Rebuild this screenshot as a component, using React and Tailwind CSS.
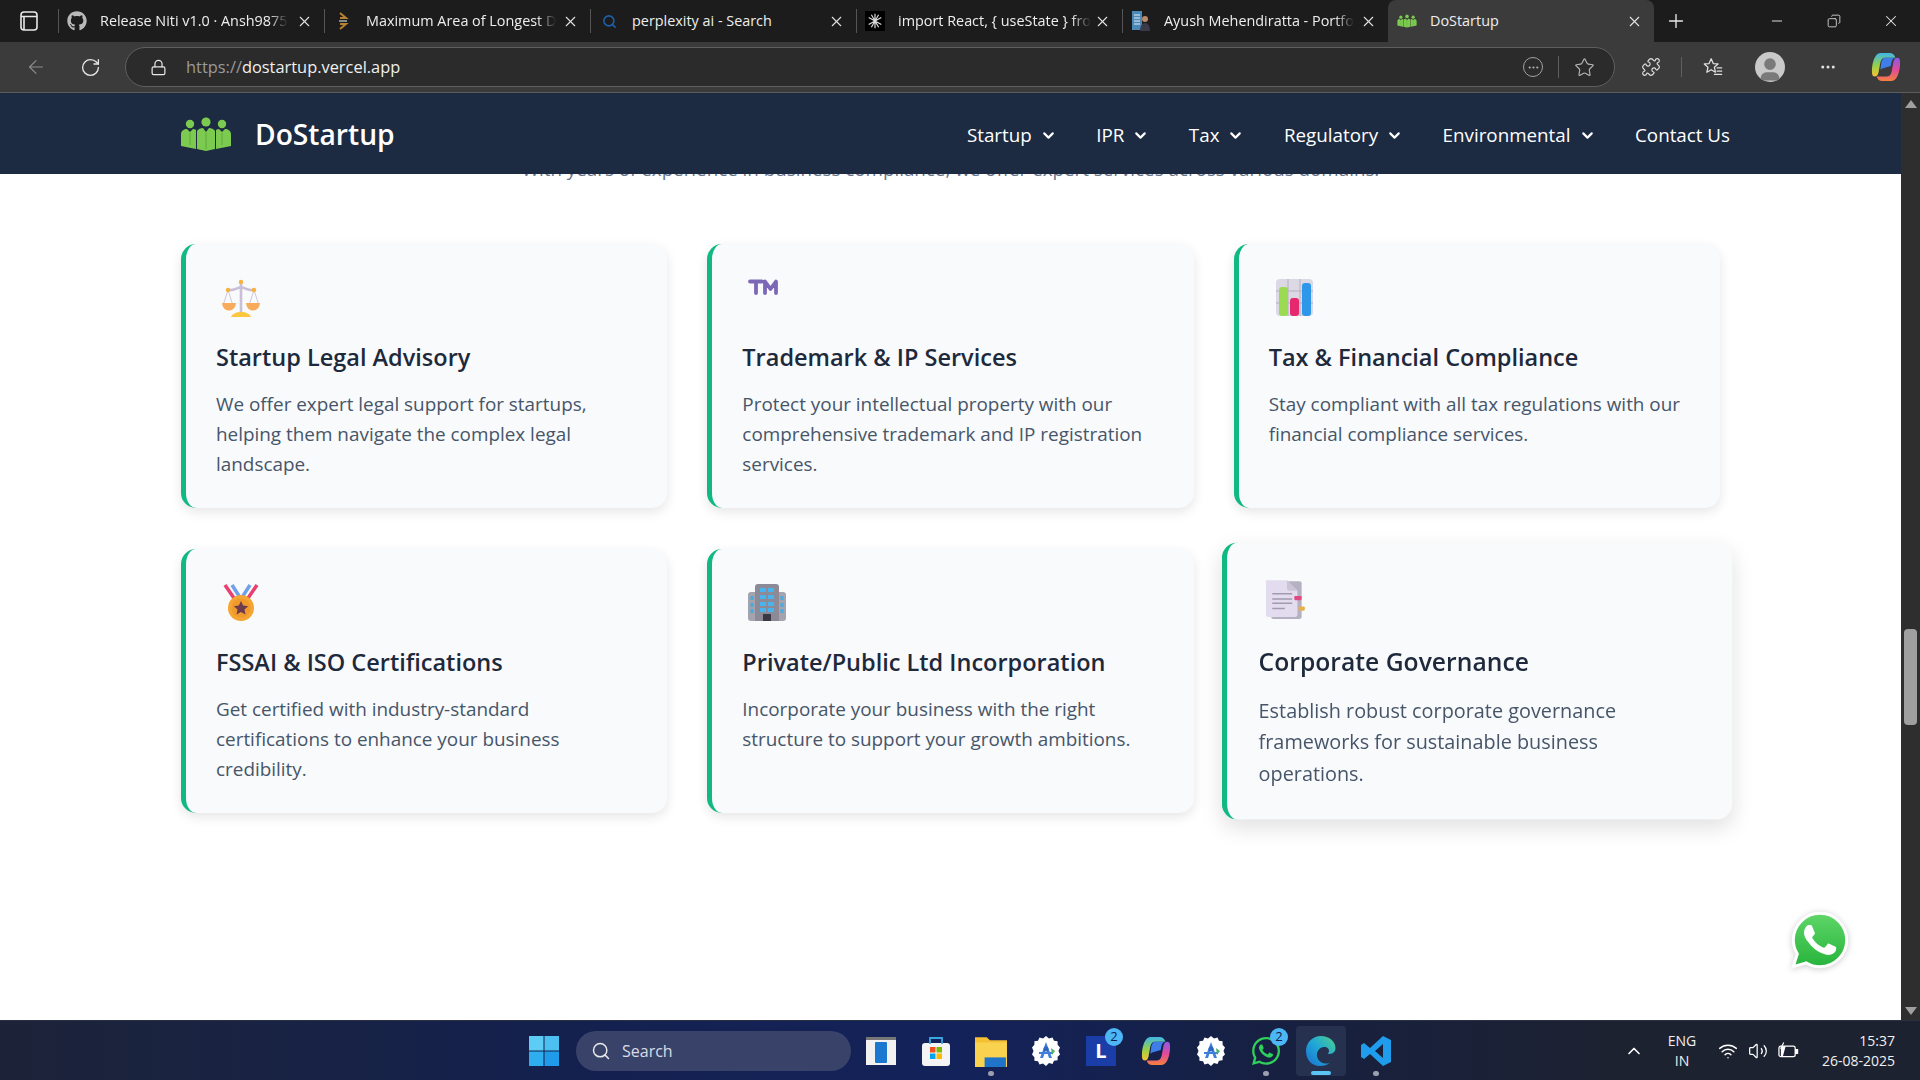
import React from "react";
import { FaGithub, FaWhatsapp } from "react-icons/fa";
import { ArrowLeft, RotateCw, Lock, Star, Puzzle, MoreHorizontal, X, Plus, Minus, Copy, ChevronDown, ChevronUp, Search, Wifi, Volume2, User } from "lucide-react";

const Logo = ({ className }) => (
  <svg viewBox="0 0 52 34" className={className}>
    <g fill="#7ccb50">
      <circle cx="10" cy="7" r="4.2" /><circle cx="26" cy="5" r="4.6" /><circle cx="42" cy="7" r="4.2" />
      <path d="M1 17c0-3 3-5 6-5l3 3 3-3c1 0 2 .3 3 1v19l-15-3z" />
      <path d="M51 17c0-3-3-5-6-5l-3 3-3-3c-1 0-2 .3-3 1v19l15-3z" />
      <path d="M17 14c1-2 4-3 6-3l3 4 3-4c2 0 5 1 6 3v18l-9 2-9-2z" />
    </g>
    <path d="M26 16v16M10 16v12M42 16v12" stroke="#5aa838" strokeWidth="1" />
  </svg>
);

const Scales = () => (
  <svg viewBox="0 0 40 40" className="w-10 h-10">
    <path d="M20 3v32M7 12c5 1 9-2 13-3 4 1 8 4 13 3" stroke="#c9bfd6" strokeWidth="2.600" fill="none" />
    <path d="M7 12 2.500 26M7 12l4.500 14M33 12l-4.500 14M33 12l4.500 14" stroke="#cfc6da" strokeWidth="1" fill="none" />
    <circle cx="20" cy="4" r="2.200" fill="#f7b13c" /><circle cx="7" cy="12" r="2.200" fill="#f7b13c" /><circle cx="33" cy="12" r="2.200" fill="#f7b13c" />
    <path d="M1 25h14c-.5 5-3.500 7.500-7 7.500S1.500 30 1 25zM25 25h14c-.5 5-3.500 7.500-7 7.500S25.500 30 25 25z" fill="#f9ab5c" />
    <path d="M10 39c1-3 5-5 10-5s9 2 10 5z" fill="#fcc83f" />
  </svg>
);
const TM = () => (
  <svg viewBox="0 0 40 40" className="w-10 h-10">
    <path d="M3 3.500h12M9 3.500V15M18 15V3.500l5.500 7.500 5.500-7.500V15" stroke="#7d68b8" strokeWidth="3.800" fill="none" strokeLinecap="round" strokeLinejoin="round" />
  </svg>
);
const Chart = () => (
  <svg viewBox="0 0 40 40" className="w-10 h-10">
    <rect x="2" y="1" width="37" height="37" rx="4" fill="#dcd8e4" />
    <path d="M14 1v37M26 1v37M2 13h37M2 25h37" stroke="#b5b0bf" strokeWidth="1" />
    <rect x="5" y="9" width="9" height="29" rx="3" fill="#9adb52" />
    <rect x="16" y="20" width="9" height="18" rx="3" fill="#e6286e" />
    <rect x="28" y="5" width="9" height="33" rx="3" fill="#2e97ea" />
  </svg>
);
const Medal = () => (
  <svg viewBox="0 0 40 40" className="w-10 h-10">
    <path d="M4 2l11 16M36 2 25 18" stroke="#e8416f" strokeWidth="3.500" />
    <path d="M11 2l9 14M29 2l-9 14" stroke="#6fa0ea" strokeWidth="3.500" />
    <circle cx="20" cy="25" r="13" fill="#f5a532" />
    <circle cx="20" cy="25" r="9.500" fill="#ee9a2c" />
    <path d="m20 18 2.200 4.600 5 .6-3.700 3.400 1 5-4.500-2.500-4.500 2.500 1-5-3.700-3.400 5-.6z" fill="#6d3a4e" />
  </svg>
);
const Building = () => (
  <svg viewBox="0 0 40 40" className="w-10 h-10">
    <rect x="1" y="9" width="38" height="29" rx="3" fill="#a5a3ad" />
    <path d="M8 4a3 3 0 0 1 3-3h18a3 3 0 0 1 3 3v34H8z" fill="#8d8a97" />
    {[5, 12, 19, 25].map((y) => (
      <g key={y} fill="#49b3ee"><rect x="13" y={y} width="6" height="4" /><rect x="21" y={y} width="6" height="4" /></g>
    ))}
    {[13, 20, 26].map((y) => (
      <g key={y} fill="#4aa9dd"><rect x="3.500" y={y} width="3" height="4" /><rect x="33.500" y={y} width="3" height="4" /></g>
    ))}
    <rect x="16" y="31" width="8" height="7" fill="#3a3644" />
  </svg>
);
const Doc = () => (
  <svg viewBox="0 0 40 40" className="w-10 h-10">
    <rect x="7" y="3" width="29" height="36" rx="2" fill="#b6b1c2" />
    <path d="M2 2h20l10 10v23a2 2 0 0 1-2 2H4a2 2 0 0 1-2-2z" fill="#e3dcef" />
    <path d="M22 2l10 10h-8a2 2 0 0 1-2-2z" fill="#cbc4d8" />
    <path d="M8 15h19M8 20h19M8 24h19M8 29h12" stroke="#a29bb0" strokeWidth="1.400" />
    <rect x="29" y="17" width="7" height="4" rx="1" fill="#e14a80" />
    <rect x="33" y="27" width="6" height="4" rx="1" fill="#e8b04a" />
  </svg>
);

const Tab = ({ icon, title, active, fade }) => (
  <div className={`relative w-[266px] h-full flex items-center shrink-0 ${active ? "bg-[#3b3b3b] rounded-t-lg" : ""}`}>
    {!active && <span className="absolute left-0 top-[9px] h-[24px] w-px bg-[#555555]" />}
    <span className="w-[20px] h-[20px] ml-[9px] mr-[13px] flex items-center justify-center shrink-0">{icon}</span>
    <span className={`whitespace-nowrap text-[14.4px] text-[#eeeeee] ${fade ? "[mask-image:linear-gradient(to_right,black_90%,transparent)]" : ""}`}>{title}</span>
    <X size={17} className="ml-auto mr-[11px] text-[#e4e4e4]" strokeWidth={1.500} />
  </div>
);

const NavItem = ({ label, arrow = true }) => (
  <div className="flex items-center gap-[8px] text-[18.8px] text-white pt-[3px]">
    <span>{label}</span>
    {arrow && <ChevronDown size={17} strokeWidth={3} />}
  </div>
);

const Card = ({ icon, title, text, hover }) => (
  <div className={`h-[264px] bg-[#f8fafc] border-l-[5px] border-[#10b981] rounded-[15px] pt-[30px] pl-[30px] pr-[30px] ${hover ? "scale-105 shadow-[0_8px_20px_rgba(0,0,0,0.12)]" : "shadow-[0_4px_12px_rgba(0,0,0,0.1)]"}`}>
    <div className="h-[63px] pl-[5px] pt-[4px]">{icon}</div>
    <h3 className="text-[23.5px] leading-[40px] font-semibold text-[#1e293b] mb-[12px] whitespace-nowrap">{title}</h3>
    <p className="text-[18.9px] leading-[30px] text-[#475569]">{text}</p>
  </div>
);

const Pin = ({ children, n, dot, active }) => (
  <div className={`relative w-[50px] h-[50px] flex items-center justify-center rounded ${active ? "bg-[#26304f]" : ""}`}>
    {children}
    {n && <span className="absolute right-[3px] top-[2px] w-[18px] h-[18px] rounded-full bg-[#4db6f5] text-[#10204a] text-[13px] flex items-center justify-center">{n}</span>}
    {dot && <span className="absolute bottom-[0px] w-[6px] h-[5px] rounded-sm bg-[#9aa0ad]" />}
    {active && <span className="absolute bottom-[1px] w-[20px] h-[4px] rounded-sm bg-[#5cc4f5]" />}
  </div>
);

const AStudio = () => (
  <svg viewBox="0 0 32 32" className="w-[32px] h-[32px]">
    <path d="M16 1l3 2.500 3.500-1 1.500 3.300 3.600.5v3.500L30 12.500 28.500 16l1.500 3.500-2.400 2.200v3.500l-3.600.5-1.500 3.300-3.500-1L16 31l-3-2.500-3.500 1L8 26.200l-3.600-.5v-3.500L2 19.500 3.500 16 2 12.500l2.400-2.700V6.300L8 5.800l1.500-3.300 3.500 1z" fill="#fff" />
    <path d="M16 7l-6 16h3l3-9 3 9h3z" fill="#3f7fd9" /><circle cx="16" cy="14" r="2.500" fill="#2c66c0" /><path d="M9 18h14" stroke="#3f7fd9" strokeWidth="2" />
    <path d="M21 13l4 3-3 4z" fill="#4caf6a" />
  </svg>
);

const Copilot = ({ size, id }) => (
  <svg viewBox="0 0 32 32" style={{ width: size, height: size }}>
    <defs>
      <linearGradient id={`${id}a`} x1="0" y1="0" x2="0" y2="1"><stop offset="0" stopColor="#3fb6e8" /><stop offset=".5" stopColor="#8fd14f" /><stop offset="1" stopColor="#f7c430" /></linearGradient>
      <linearGradient id={`${id}b`} x1="0" y1="0" x2="0" y2="1"><stop offset="0" stopColor="#8a5be8" /><stop offset=".5" stopColor="#e0499c" /><stop offset="1" stopColor="#f5803e" /></linearGradient>
    </defs>
    <path d="M10 1h10c3 0 5 2 6 5H15c-3 0-4 2-5 5L8 22c-1 3-2 4-4 4-3 0-3-3-3-6C1 12 4 1 10 1z" fill={`url(#${id}a)`} />
    <path d="M22 31H12c-3 0-5-2-6-5h11c3 0 4-2 5-5l2-11c1-3 2-4 4-4 3 0 3 3 3 6 0 8-3 19-9 19z" fill={`url(#${id}b)`} />
    <path d="M15 6h11c-1.500 0-3 1-4 4l-1 5-7 2c-2 .5-3 1-4 2l1-8c1-3 2-5 4-5z" fill="#3f7de8" />
  </svg>
);

const rows = [
  { icon: <Scales />, title: "Startup Legal Advisory", text: "We offer expert legal support for startups, helping them navigate the complex legal landscape." },
  { icon: <TM />, title: "Trademark & IP Services", text: "Protect your intellectual property with our comprehensive trademark and IP registration services." },
  { icon: <Chart />, title: "Tax & Financial Compliance", text: "Stay compliant with all tax regulations with our financial compliance services." },
  { icon: <Medal />, title: "FSSAI & ISO Certifications", text: "Get certified with industry-standard certifications to enhance your business credibility." },
  { icon: <Building />, title: "Private/Public Ltd Incorporation", text: "Incorporate your business with the right structure to support your growth ambitions." },
  { icon: <Doc />, title: "Corporate Governance", text: "Establish robust corporate governance frameworks for sustainable business operations.", hover: true },
];

export default function App() {
  return (
    <div className="w-[1920px] h-[1080px] flex flex-col overflow-hidden bg-white font-['Open_Sans',sans-serif]">
      {/* tab strip */}
      <div className="h-[42px] bg-[#1c1c1c] flex items-end shrink-0">
        <div className="w-[58px] h-full flex items-center justify-center pr-[1px]">
          <svg viewBox="0 0 18 20" className="w-[18px] h-[20px]" fill="none" stroke="#e8e8e8" strokeWidth="1.600"><rect x="1" y="1" width="16" height="18" rx="3" /><path d="M1 5.500h16M4 5.500V19" /></svg>
        </div>
        <Tab fade icon={<FaGithub size={20} color="#b9b9b9" />} title="Release Niti v1.0 · Ansh9875" />
        <Tab fade icon={<svg viewBox="0 0 12 20" className="w-[12px] h-[20px]"><path d="M3 2l6 5H3M3 18l6-5H3" stroke="#b78231" strokeWidth="2" fill="none" /><path d="M2 10h8" stroke="#888" strokeWidth="2" /></svg>} title="Maximum Area of Longest D" />
        <Tab icon={<Search size={15} color="#1d5fa8" strokeWidth={2.500} />} title="perplexity ai - Search" />
        <Tab fade icon={<span className="w-[20px] h-[20px] bg-black flex items-center justify-center"><svg viewBox="0 0 20 20" className="w-[18px] h-[18px]" stroke="#ddd" strokeWidth="1.300" fill="none"><path d="M10 2v16M3 6l14 8M17 6 3 14M6 3l8 14M14 3 6 17" /></svg></span>} title="import React, { useState } fro" />
        <Tab fade icon={<svg viewBox="0 0 20 22" className="w-[20px] h-[22px]"><rect x="1" y="1" width="10" height="19" fill="#4a88b8" /><path d="M3 5h6M3 8h6M3 11h6M3 14h6" stroke="#e8eef4" /><circle cx="14" cy="9" r="3" fill="#b98a6c" /><path d="M9 21c0-5 2-8 5-8s5 3 5 8z" fill="#3a3a4a" /></svg>} title="Ayush Mehendiratta - Portfo" />
        <Tab active icon={<Logo className="w-[20px] h-[20px]" />} title="DoStartup" />
        <div className="w-[44px] h-full flex items-center justify-center"><Plus size={22} color="#e8e8e8" strokeWidth={1.500} /></div>
        <div className="ml-auto flex h-full items-center text-[#e8e8e8]">
          <div className="w-[57px] flex justify-center"><Minus size={16} strokeWidth={1.400} /></div>
          <div className="w-[57px] flex justify-center"><Copy size={14} strokeWidth={1.400} className="-scale-x-100" /></div>
          <div className="w-[58px] flex justify-center"><X size={18} strokeWidth={1.400} /></div>
        </div>
      </div>
      {/* toolbar */}
      <div className="h-[51px] bg-[#3b3b3b] border-b border-[#5c5c5c] flex items-center shrink-0">
        <div className="w-[70px] flex justify-center pl-[1px]"><ArrowLeft size={22} color="#8c8c8c" strokeWidth={1.300} /></div>
        <div className="w-[40px] flex justify-center"><RotateCw size={21} color="#e8e8e8" strokeWidth={1.500} /></div>
        <div className="ml-[15px] w-[1490px] h-[40px] rounded-full bg-[#2b2b2b] border-[1.5px] border-[#5f5f5f] flex items-center">
          <Lock size={17} color="#e8e8e8" strokeWidth={1.700} className="ml-[24px]" />
          <div className="ml-[19px] text-[16.4px] text-[#9a9a9a] pt-[1px]">https://<span className="text-[#f0f0f0]">dostartup.vercel.app</span></div>
          <div className="ml-auto mr-[19px] flex items-center text-[#b5b5b5]">
            <span className="w-[20px] h-[20px] rounded-full border border-[#a0a0a0] flex items-center justify-center"><MoreHorizontal size={13} /></span>
            <span className="mx-[15px] w-px h-[22px] bg-[#5f5f5f]" />
            <Star size={21} strokeWidth={1.300} />
          </div>
        </div>
        <div className="w-[72px] flex justify-center"><Puzzle size={20} color="#e0e0e0" strokeWidth={1.400} /></div>
        <span className="w-px h-[20px] bg-[#5f5f5f] -ml-[6px]" />
        <div className="w-[62px] flex justify-center">
          <svg viewBox="0 0 24 24" className="w-[22px] h-[22px]" fill="none" stroke="#e0e0e0" strokeWidth="1.400" strokeLinejoin="round"><path d="M10 3l2.300 5.200 5.200.5-4 3.600 1.200 5.400L10 15l-4.700 2.700 1.200-5.400-4-3.600 5.200-.5z" /><path d="M16 13h6M16 16.500h6M13 20h9" /></svg>
        </div>
        <div className="w-[30px] h-[30px] rounded-full bg-[#c9c9c9] flex items-center justify-center overflow-hidden ml-[11px]"><User size={28} color="#7a7a7a" fill="#7a7a7a" className="mt-[6px]" /></div>
        <div className="w-[86px] flex justify-center"><MoreHorizontal size={18} color="#e0e0e0" /></div>
        <div className="ml-[0px]"><Copilot size={30} id="cpa" /></div>
      </div>
      {/* viewport */}
      <div className="flex-1 min-h-0 flex">
        <div className="relative w-[1901px] overflow-hidden">
          <nav className="relative z-10 h-[81px] bg-[#1c2a42] flex items-center pl-[180px] pr-[171px]">
            <Logo className="w-[52px] h-[34px]" />
            <span className="ml-[23px] text-[28.2px] font-semibold text-white pt-[2px]">DoStartup</span>
            <div className="ml-auto flex items-center gap-[39.5px]">
              <NavItem label="Startup" /><NavItem label="IPR" /><NavItem label="Tax" /><NavItem label="Regulatory" /><NavItem label="Environmental" /><NavItem label="Contact Us" arrow={false} />
            </div>
          </nav>
          <p className="-mt-[20px] h-[30px] leading-[30px] text-[18.8px] text-[#64748b] text-center">With years of experience in business compliance, we offer expert services across various domains.</p>
          <div className="mt-[60px] ml-[181px] w-[1539px] grid grid-cols-3 gap-x-[40px] gap-y-[41px]">
            {rows.map((r) => <Card key={r.title} {...r} />)}
          </div>
          <svg viewBox="0 0 24 24" className="absolute right-[49px] bottom-[48px] w-[64px] h-[64px] drop-shadow-[0_1px_3px_rgba(0,0,0,0.2)]">
            <defs><linearGradient id="wa" x1="0" y1="0" x2="0" y2="1"><stop offset="0" stopColor="#5fd668" /><stop offset="1" stopColor="#27b43c" /></linearGradient></defs>
            <path d="M12 2C6.500 2 2 6.500 2 12c0 1.900.5 3.600 1.500 5.200L2 22l4.900-1.400c1.500.9 3.200 1.400 5.100 1.400 5.500 0 10-4.500 10-10S17.500 2 12 2z" fill="url(#wa)" stroke="#fff" strokeWidth="1.100" />
            <path d="M17.472 14.382c-.297-.149-1.758-.867-2.03-.967-.273-.099-.471-.148-.67.15-.197.297-.767.966-.94 1.164-.173.199-.347.223-.644.075-.297-.15-1.255-.463-2.39-1.475-.883-.788-1.48-1.761-1.653-2.059-.173-.297-.018-.458.13-.606.134-.133.298-.347.446-.52.149-.174.198-.298.298-.497.099-.198.05-.371-.025-.52-.075-.149-.669-1.612-.916-2.207-.242-.579-.487-.5-.669-.51-.173-.008-.371-.01-.57-.01-.198 0-.52.074-.792.372-.272.297-1.04 1.016-1.04 2.479 0 1.462 1.065 2.875 1.213 3.074.149.198 2.096 3.2 5.077 4.487.709.306 1.262.489 1.694.625.712.227 1.36.195 1.871.118.571-.085 1.758-.719 2.006-1.413.248-.694.248-1.289.173-1.413-.074-.124-.272-.198-.57-.347z" fill="#fff" />
          </svg>
        </div>
        <div className="w-[19px] bg-[#2e2e2e] flex flex-col items-center">
          <span className="mt-[7px] w-0 h-0 border-l-[6px] border-r-[6px] border-b-[8px] border-l-transparent border-r-transparent border-b-[#a0a0a0]" />
          <span className="mt-[521px] w-[13px] h-[96px] bg-[#9f9f9f] rounded-sm" />
          <span className="mt-auto mb-[5px] w-0 h-0 border-l-[6px] border-r-[6px] border-t-[8px] border-l-transparent border-r-transparent border-t-[#a0a0a0]" />
        </div>
      </div>
      {/* taskbar */}
      <div className="h-[60px] shrink-0 flex items-center pl-[529px] bg-[linear-gradient(90deg,#1c2338_0%,#14214f_30%,#13225a_50%,#17203f_68%,#1d2230_85%)] border-t border-[#2a3044]">
        <svg viewBox="0 0 30 30" className="w-[30px] h-[30px]"><rect width="14.500" height="14.500" fill="#5dcdf5" /><rect x="15.500" width="14.500" height="14.500" fill="#4cc0f0" /><rect y="15.500" width="14.500" height="14.500" fill="#2eaeef" /><rect x="15.500" y="15.500" width="14.500" height="14.500" fill="#1f9bea" /></svg>
        <div className="ml-[17px] w-[275px] h-[40px] rounded-full bg-[#39436a] flex items-center">
          <Search size={20} color="#e8e8e8" strokeWidth={1.800} className="ml-[15px]" />
          <span className="ml-[11px] text-[16px] text-[#d8dce6]">Search</span>
        </div>
        <div className="ml-[5px] flex items-center gap-[5px]">
          <Pin><svg viewBox="0 0 30 30" className="w-[30px] h-[30px]"><rect y="1" width="30" height="28" fill="#f2f2f2" /><rect y="1" width="30" height="3" fill="#777" /><rect x="9" y="6" width="12" height="21" rx="1" fill="#1a78d0" /></svg></Pin>
          <Pin><svg viewBox="0 0 30 30" className="w-[30px] h-[30px]"><rect x="1" y="7" width="28" height="23" rx="3" fill="#f4f4f4" /><path d="M9 8V2h12v6" stroke="#39a8e0" strokeWidth="1.800" fill="none" /><rect x="9" y="11" width="5.500" height="5.500" fill="#f25022" /><rect x="15.500" y="11" width="5.500" height="5.500" fill="#7fba00" /><rect x="9" y="17.500" width="5.500" height="5.500" fill="#00a4ef" /><rect x="15.500" y="17.500" width="5.500" height="5.500" fill="#ffb900" /></svg></Pin>
          <Pin dot><svg viewBox="0 0 30 30" className="w-[32px] h-[32px]"><path d="M0 2h11l3 3h16v25H0z" fill="#f5c033" /><rect x="0" y="7" width="30" height="23" fill="#f9d24f" /><rect x="9" y="21" width="20" height="9" fill="#1f74c9" /></svg></Pin>
          <Pin><AStudio /></Pin>
          <Pin n="2"><span className="w-[30px] h-[30px] bg-[#1a3da8] text-white font-bold text-[20px] flex items-center justify-center">L</span></Pin>
          <Pin><Copilot size={30} id="cpb" /></Pin>
          <Pin><AStudio /></Pin>
          <Pin n="2" dot><FaWhatsapp size={32} color="#2fcf5c" /></Pin>
          <Pin active>
            <svg viewBox="0 0 32 32" className="w-[32px] h-[32px]"><defs><linearGradient id="ed" x1="1" y1="0" x2="0" y2="1"><stop offset="0" stopColor="#4fd08a" /><stop offset=".5" stopColor="#1fa6d8" /><stop offset="1" stopColor="#1b6fd0" /></linearGradient></defs><path d="M16 1C7 1 1 8 1 16c0 9 6 15 14 15 4 0 7-1 10-3-6 2-12-1-13-7-.7-5 3-9 7-9 3.500 0 5 2 5 4 0 1-.5 2-1.500 2.500 4 1.500 8-1 8-5.500C30.500 6 24 1 16 1z" fill="url(#ed)" /></svg>
          </Pin>
          <Pin dot><svg viewBox="0 0 32 32" className="w-[32px] h-[32px]"><path d="M23 1l8 4v22l-8 4-13-12-6 5-3-2V10l3-2 6 5zM23 9l-8 7 8 7z" fill="#1f9ceb" fillRule="evenodd" /></svg></Pin>
        </div>
        <div className="ml-[223px] text-white"><ChevronUp size={20} strokeWidth={2} /></div>
        <div className="ml-[14px] w-[48px] text-center text-[14px] leading-[20px] text-[#f0f0f0]"><div>ENG</div><div>IN</div></div>
        <div className="ml-[12px] flex items-center gap-[10px] text-white">
          <Wifi size={20} strokeWidth={1.800} /><Volume2 size={20} strokeWidth={1.500} />
          <svg viewBox="0 0 22 18" className="w-[21px] h-[18px]" fill="none" stroke="#fff" strokeWidth="1.300"><rect x="1" y="4" width="17" height="11" rx="2" /><path d="M18 7.500h2.500v4H18" fill="#fff" /><path d="M3 4h5l-3 11H3z" fill="#fff" stroke="none" /><path d="M6 0 3 6h3l-2 5" strokeWidth="1.200" /></svg>
        </div>
        <div className="ml-auto mr-[25px] text-right text-[14px] leading-[20px] text-[#f0f0f0] whitespace-nowrap"><div>15:37</div><div>26-08-2025</div></div>
      </div>
    </div>
  );
}
